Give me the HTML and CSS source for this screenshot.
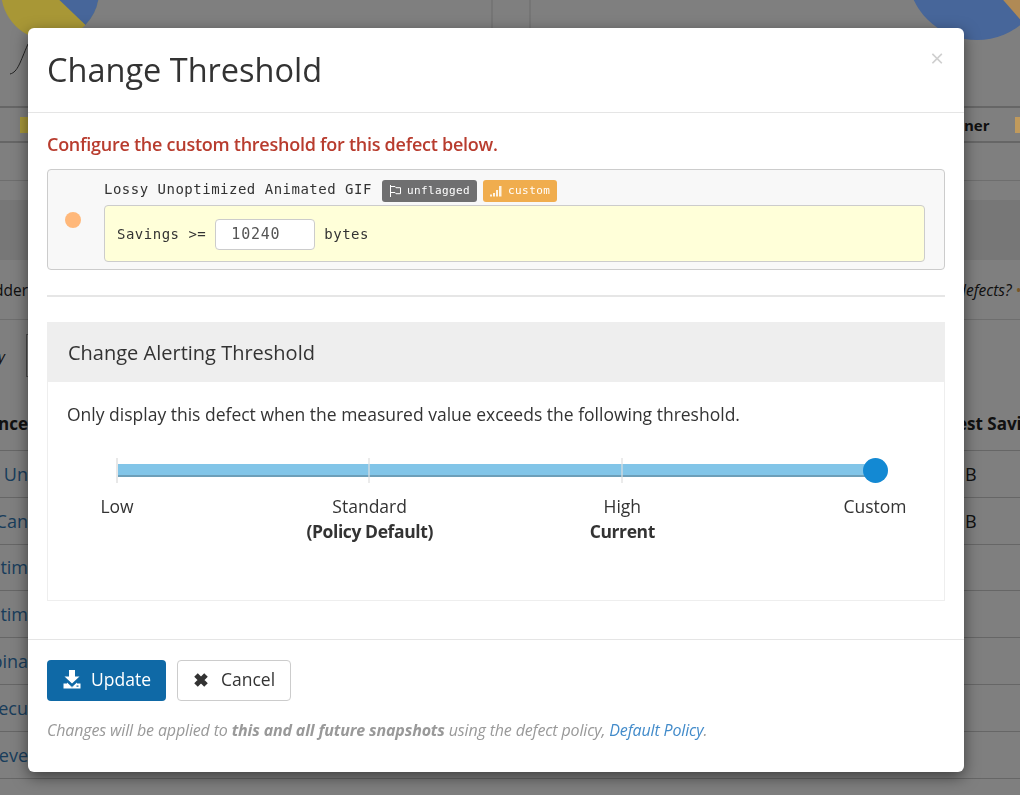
FILE: index.html
```html
<!DOCTYPE html>
<html lang="en">
<head>
<meta charset="utf-8">
<title>Change Threshold</title>
<link rel="stylesheet" href="styles.css">
</head>
<body>
<div class="page">
  <svg class="charts" width="1020" height="106" viewBox="0 0 1020 106">
    <line x1="492" y1="0" x2="492" y2="30" stroke="#757575" stroke-width="2"/>
    <line x1="530" y1="0" x2="530" y2="30" stroke="#757575" stroke-width="2"/>
    <circle cx="50" cy="-9" r="49" fill="#a89736"/>
    <path d="M50 -9 L85.500 25 A49 49 0 0 0 99 -9 Z" fill="#47669a"/>
    <path d="M10 74 C18 72 20 62 28 44" fill="none" stroke="#222" stroke-width="1"/>
    <circle cx="977" cy="-30" r="70" fill="#47669a"/>
    <path d="M977 -30 L1025 25 A70 70 0 0 0 1047 -30 Z" fill="#b08a55"/>
  </svg>
  <div class="legend">
    <span class="swatch swatch-yellow"></span>
    <div class="legend-right"><b>ner</b><span class="swatch swatch-tan"></span></div>
  </div>
  <div class="bg-line"></div>
  <div class="band"></div>
  <div class="intro">
    <div class="side-left">dder</div>
    <div class="side-right"><i>defects? </i><span class="more">•</span></div>
  </div>
  <div class="toolbar"><span class="tool-text"><i>y</i></span><span class="tool-box"></span></div>
  <div class="thead"><div class="side-left"><b>nce</b></div><div class="side-right"><b>est Savi</b></div></div>
  <div class="row"><div class="side-left link">Un</div><div class="side-right unit">B</div></div>
  <div class="row"><div class="side-left link">Can</div><div class="side-right unit">B</div></div>
  <div class="row"><div class="side-left link">tim</div></div>
  <div class="row"><div class="side-left link">tim</div></div>
  <div class="row"><div class="side-left link">bina</div></div>
  <div class="row"><div class="side-left link">xecu</div></div>
  <div class="row"><div class="side-left link">eve</div></div>
</div>

<div class="backdrop"></div>

<div class="modal">
  <header class="modal-header">
    <h1>Change Threshold</h1>
    <span class="close">×</span>
  </header>
  <div class="modal-body">
    <h2>Configure the custom threshold for this defect below.</h2>
    <div class="defect">
      <span class="dot"></span>
      <div class="defect-main">
        <div class="defect-title">
          <span>Lossy Unoptimized Animated GIF</span>
          <span class="badge badge-grey">
            <svg class="badge-icon" viewBox="0 0 14 14" width="14" height="14"><path d="M2.500 1v12M2.500 2.500h4.500l1 1.200h4.500v6h-4.500l-1-1.200h-4.500" fill="none" stroke="#fff" stroke-width="1"/></svg>
            <span>unflagged</span>
          </span>
          <span class="badge badge-orange">
            <svg class="badge-icon" viewBox="0 0 14 14" width="14" height="14"><path d="M1 10.500h2v2h-2zM4 9h2v3.500h-2zM7 6h2v6.500h-2zM10 2h2.500v10.500h-2.500z" fill="#fff" opacity=".85"/></svg>
            <span>custom</span>
          </span>
        </div>
        <div class="defect-form">
          <span>Savings &gt;=</span>
          <span class="input">10240</span>
          <span>bytes</span>
        </div>
      </div>
    </div>
    <hr class="rule">
    <section class="panel">
      <h3>Change Alerting Threshold</h3>
      <div class="panel-body">
        <p>Only display this defect when the measured value exceeds the following threshold.</p>
        <div class="slider">
          <div class="track">
            <span class="tick tick-a"></span>
            <span class="tick tick-b"></span>
            <span class="tick tick-c"></span>
            <span class="handle"></span>
          </div>
          <div class="labels">
            <div class="label"><div>Low</div></div>
            <div class="label"><div>Standard<br><b>(Policy Default)</b></div></div>
            <div class="label"><div>High<br><b>Current</b></div></div>
            <div class="label"><div>Custom</div></div>
          </div>
        </div>
      </div>
    </section>
  </div>
  <footer class="modal-footer">
    <div class="buttons">
      <span class="btn btn-primary">
        <svg viewBox="0 0 18 19" width="18" height="19"><path d="M6 0h6v6.500h4.500L9 13.500 1.500 6.500H6z" fill="#fff"/><path d="M0.500 13.500h3.500l5 4 5-4h3.500v5h-17z" fill="#fff"/><path d="M4 12.500l5 4.500 5-4.500v2l-5 3-5-3z" fill="#fff"/><rect x="13.500" y="15.500" width="2" height="1.200" fill="#0f69a6"/></svg>
        <span>Update</span>
      </span>
      <span class="btn btn-default">
        <svg viewBox="0 0 16 16" width="16" height="16"><path d="M3 3l10 10M13 3L3 13" fill="none" stroke="#333" stroke-width="5"/></svg>
        <span>Cancel</span>
      </span>
    </div>
    <p class="note">Changes will be applied to <b>this and all future snapshots</b> using the defect policy, <a href="#">Default Policy</a>.</p>
  </footer>
</div>
</body>
</html>
```
FILE: styles.css
```css
* { box-sizing: border-box; }
html, body { margin: 0; padding: 0; }
body {
  width: 1020px;
  height: 795px;
  overflow: hidden;
  background: #fff;
  font-family: "Open Sans", sans-serif;
  color: #333;
}

/* Page behind the dialog */
.page { width: 1020px; height: 795px; overflow: hidden; background: #fff; font-size: 18px; color: #222; }
.charts { display: block; position: relative; z-index: 1; }
.legend {
  height: 37px;
  border-top: 2px solid #ccc;
  border-bottom: 2px solid #ccc;
  display: flex;
  justify-content: space-between;
  align-items: center;
  padding-left: 20px;
  font-size: 15px;
}
.legend-right { display: flex; align-items: center; }
.legend-right b { width: 51px; padding-left: 0; }
.swatch { display: block; width: 16px; height: 16px; position: relative; z-index: 1; }
.swatch-yellow { background: #a8983a; }
.swatch-tan { width: 5px; background: #c09a5c; }
.bg-line { height: 38px; border-bottom: 1px solid #ddd; }
.band { height: 60px; margin-top: 19px; background: #eee; }
.intro {
  height: 60px;
  display: flex;
  justify-content: space-between;
  align-items: center;
  font-size: 15.500px;
  border-bottom: 1px solid #ddd;
}
.side-left { width: 28px; display: flex; justify-content: flex-end; white-space: nowrap; overflow: hidden; }
.side-right { width: 63px; white-space: nowrap; overflow: hidden; text-align: left; }
.unit { padding-left: 8px; }
.more { color: #f0ad4e; }
.toolbar { height: 43px; margin-top: 14px; display: flex; align-items: center; }
.tool-text { width: 26px; font-size: 15px; line-height: 20px; overflow: hidden; text-indent: -2px; }
.tool-box { display: block; width: 10px; height: 43px; border: 1px solid #999; }
.thead {
  height: 74px;
  padding-top: 20px;
  display: flex;
  justify-content: space-between;
  align-items: center;
  font-size: 17px;
  border-bottom: 1px solid #ccc;
}
.row {
  height: 46.800px;
  display: flex;
  justify-content: space-between;
  align-items: center;
  border-bottom: 1px solid #ccc;
}
.link { color: #337ab7; }
.backdrop { position: fixed; inset: 0; background: rgba(0, 0, 0, .5); }

/* Dialog */
.modal {
  position: absolute;
  z-index: 2;
  left: 28px;
  top: 28px;
  width: 936px;
  height: 744px;
  background: #fff;
  border-radius: 6px;
  box-shadow: 0 5px 15px rgba(0, 0, 0, .5);
  display: flex;
  flex-direction: column;
}
.modal-header {
  height: 85px;
  border-bottom: 1px solid #e5e5e5;
  padding: 0 19px;
  display: flex;
  justify-content: space-between;
  align-items: flex-start;
}
.modal-header h1 { margin: 19px 0 0; font-size: 32.500px; line-height: 45px; font-weight: 400; color: #333; }
.close { margin-top: 11px; margin-right: 1px; font-size: 24px; line-height: 38px; color: #cfcfcf; font-weight: 400; }
.modal-body { height: 526px; padding: 0 19px; }
.modal-body h2 { margin: 19px 0 0; font-size: 18px; line-height: 24px; font-weight: 600; color: #b83c2e; letter-spacing: -.26px; }
.defect {
  margin-top: 13px;
  height: 101px;
  background: #f8f8f8;
  border: 1px solid #ccc;
  border-radius: 4px;
  padding: 0 19px 0 17px;
  display: flex;
  align-items: center;
  gap: 23px;
  font-family: "DejaVu Sans Mono", monospace;
  font-size: 14px;
  letter-spacing: .5px;
  color: #333;
}
.dot { display: block; width: 16px; height: 16px; border-radius: 50%; background: #ffb87a; flex: none; }
.defect-main { flex: 1; display: flex; flex-direction: column; gap: 3px; margin-top: 0; }
.defect-title { display: flex; align-items: center; gap: 6px; height: 24px; padding-top: 2px; }
.defect-title > span:first-child { margin-right: 4px; margin-top: -4px; }
.badge {
  height: 22px;
  border-radius: 3px;
  display: flex;
  align-items: center;
  gap: 5px;
  padding: 0 7px 0 6px;
  color: #fff;
  font-size: 11px;
  letter-spacing: .4px;
}
.badge-grey { background: #6f6f70; }
.badge-orange { background: #f0ad4e; }
.badge-icon { display: block; flex: none; }
.defect-form {
  height: 57px;
  background: #ffffd9;
  border: 1px solid #ccc;
  border-radius: 4px;
  display: flex;
  align-items: center;
  padding: 2px 12px 0;
  gap: 9px;
}
.input {
  display: block;
  width: 100px;
  height: 31px;
  line-height: 29px;
  background: #fff;
  border: 1px solid #ccc;
  border-radius: 4px;
  padding-left: 15px;
  font-size: 15px;
  letter-spacing: .8px;
  color: #555;
}
.rule { margin: 25px 0 0; border: 0; border-top: 2px solid #e6e6e6; height: 0; }
.panel { margin-top: 25px; height: 279px; border: 1px solid #eee; border-top: 0; }
.panel h3 { margin: 0 -1px; height: 60px; padding-left: 21px; background: #eee; font-size: 20px; line-height: 62px; font-weight: 400; color: #333; }
.panel-body { padding: 0 19px; }
.panel-body p { margin: 19px 0 0; font-size: 17.500px; line-height: 26px; color: #333; }
.slider { margin: 37px 50px 0; }
.track {
  position: relative;
  height: 13px;
  background: #82c5e8;
  border-bottom: 2px solid #6d9fb9;
}
.tick { position: absolute; top: -6px; width: 2px; height: 25px; background: #e8e8e8; }
.tick-a { left: -1px; }
.tick-b { left: 251px; }
.tick-c { left: 504px; }
.track .tick-b, .track .tick-c { background: rgba(222, 222, 222, .6); }
.handle {
  position: absolute;
  right: -12.500px;
  top: -6px;
  width: 25px;
  height: 25px;
  border-radius: 50%;
  background: #1389d3;
}
.labels { display: flex; justify-content: space-between; margin-top: 17px; font-size: 17.500px; line-height: 25px; color: #333; }
.label { width: 0; display: flex; justify-content: center; white-space: nowrap; text-align: center; }
.label b { font-weight: 700; letter-spacing: -.4px; }
.modal-footer { border-top: 1px solid #e5e5e5; padding: 20px 19px 0; flex: 1; }
.buttons { display: flex; gap: 11px; }
.btn {
  height: 41px;
  border-radius: 4px;
  display: flex;
  align-items: center;
  font-size: 17.500px;
  line-height: 38px;
}
.btn span { margin-top: -4px; }
.btn svg { margin-top: -2px; }
.btn-primary { width: 119px; background: #0f69a6; color: #fff; padding-left: 16px; gap: 10px; }
.btn-default { width: 114px; background: #fff; border: 1px solid #ccc; color: #333; padding-left: 15px; gap: 12px; }
.note { margin: 18px 0 0; font-size: 16px; line-height: 22px; font-style: italic; color: #999; letter-spacing: -.15px; }
.note a { color: #428bca; text-decoration: none; }
```
